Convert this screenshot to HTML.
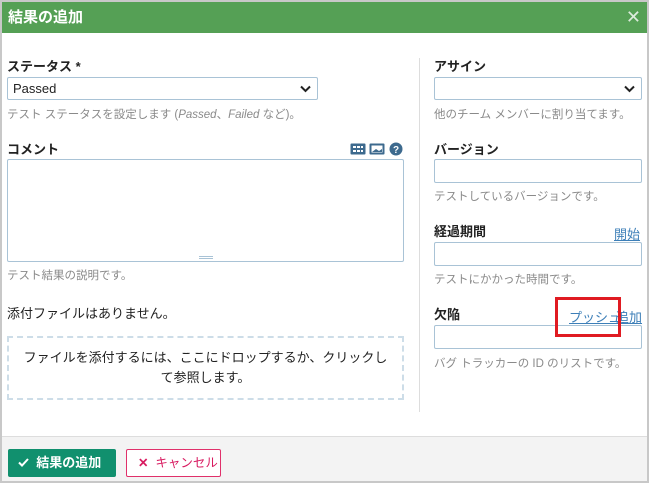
<!DOCTYPE html>
<html><head><meta charset="utf-8"><style>
*{box-sizing:border-box;margin:0;padding:0}
body{width:649px;height:483px;overflow:hidden;background:#fff;font-family:"Liberation Sans","Noto Sans CJK JP",sans-serif;font-size:13px;color:#222;position:relative}
.frame{position:absolute;left:0;top:0;width:649px;height:483px;border:2px solid #c8c8c8}
.hdr{position:absolute;left:2px;top:2px;width:645px;height:31px;background:#55a055;color:#fff;font-weight:bold;font-size:15px;line-height:31px;padding-left:6px}
.x{position:absolute;right:6px;top:0;font-size:18px;font-weight:normal;color:#dcebdc}
.a{position:absolute;white-space:nowrap}
.lbl{font-size:13px;font-weight:bold;color:#222}
.help{font-size:11.5px;color:#8a8a8a}
.box{position:absolute;border:1px solid #a9c3d6;background:#fff;border-radius:2px}
a.l{color:#3d7fb8;text-decoration:underline;font-size:13px}
.foot{position:absolute;left:2px;top:436px;width:645px;height:45px;background:#f3f3f3;border-top:1px solid #ddd}
</style></head><body>
<div class="hdr">結果の追加<span class="x">✕</span></div>
<div class="a lbl" style="left:7px;top:56px">ステータス *</div>
<div class="box" style="left:7px;top:77px;width:311px;height:23px"><span class="a" style="left:5px;top:3px;font-size:13px">Passed</span><svg class="a" style="right:6px;top:7px" width="11" height="8" viewBox="0 0 11 8"><path d="M1 1.5L5.5 6L10 1.5" stroke="#222" stroke-width="2" fill="none"/></svg></div>
<div class="a help" style="left:7px;top:106px">テスト ステータスを設定します (<i>Passed</i>、<i>Failed</i> など)。</div>
<div class="a lbl" style="left:7px;top:139px">コメント</div>
<svg class="a" style="left:350px;top:142px" width="54" height="14" viewBox="0 0 54 14"><rect x="0.5" y="1.5" width="15" height="11" fill="#3d6a8e" rx="1"/><g fill="#fff"><rect x="3" y="4" width="3" height="2"/><rect x="7" y="4" width="3" height="2"/><rect x="11" y="4" width="2" height="2"/><rect x="3" y="8" width="3" height="2"/><rect x="7" y="8" width="3" height="2"/><rect x="11" y="8" width="2" height="2"/></g><rect x="19.5" y="1.5" width="15" height="11" fill="#3d6a8e" rx="1"/><rect x="21.5" y="3.5" width="11" height="7" fill="#fff"/><path d="M22 10L26 7L29 9L32 7V10Z" fill="#3d6a8e"/><circle cx="46" cy="7" r="6.5" fill="#3d6a8e"/><text x="46" y="11" font-size="10" font-weight="bold" fill="#fff" text-anchor="middle" font-family="Liberation Sans">?</text></svg>
<div class="box" style="left:7px;top:159px;width:397px;height:103px"><div class="a" style="left:191px;top:96px;width:14px;border-top:1px solid #a9c3d6;height:3px;border-bottom:1px solid #a9c3d6"></div></div>
<div class="a help" style="left:7px;top:267px">テスト結果の説明です。</div>
<div class="a" style="left:7px;top:303px;font-size:13px">添付ファイルはありません。</div>
<div class="a" style="left:7px;top:336px;width:397px;height:64px;border:2px dashed #cddde8;text-align:center;font-size:13px;line-height:20px;padding:10px 10px 0;white-space:normal">ファイルを添付するには、ここにドロップするか、クリックして参照します。</div>
<div class="a" style="left:419px;top:58px;width:1px;height:354px;background:#ddd"></div>
<div class="a lbl" style="left:434px;top:56px">アサイン</div>
<div class="box" style="left:434px;top:77px;width:208px;height:23px"><svg class="a" style="right:6px;top:7px" width="11" height="8" viewBox="0 0 11 8"><path d="M1 1.5L5.5 6L10 1.5" stroke="#222" stroke-width="2" fill="none"/></svg></div>
<div class="a help" style="left:434px;top:106px">他のチーム メンバーに割り当てます。</div>
<div class="a lbl" style="left:434px;top:139px">バージョン</div>
<div class="box" style="left:434px;top:159px;width:208px;height:24px"></div>
<div class="a help" style="left:434px;top:188px">テストしているバージョンです。</div>
<div class="a lbl" style="left:434px;top:221px">経過期間</div>
<a class="a l" style="left:614px;top:224px">開始</a>
<div class="box" style="left:434px;top:242px;width:208px;height:24px"></div>
<div class="a help" style="left:434px;top:271px">テストにかかった時間です。</div>
<div class="a lbl" style="left:434px;top:304px">欠陥</div>
<a class="a l" style="left:569px;top:307px">プッシュ</a>
<a class="a l" style="left:616px;top:307px">追加</a>
<div class="box" style="left:434px;top:325px;width:208px;height:24px"></div>
<div class="a" style="left:555px;top:297px;width:66px;height:40px;border:3px solid #e01b22"></div>
<div class="a help" style="left:434px;top:355px">バグ トラッカーの ID のリストです。</div>
<div class="foot"></div>
<div class="a" style="left:8px;top:449px;width:108px;height:28px;background:#11906e;border-radius:2px;color:#fff;font-weight:bold;font-size:13px;line-height:28px;padding-left:10px"><svg width="11" height="9" viewBox="0 0 11 9" style="vertical-align:0"><path d="M1 4.5L4 7.5L10 1" stroke="#fff" stroke-width="2" fill="none"/></svg>&nbsp; 結果の追加</div>
<div class="a" style="left:126px;top:449px;width:95px;height:28px;background:#fff;border:1px solid #e0306a;border-radius:2px;color:#d81b60;font-size:12.5px;line-height:26px;padding-left:11px"><b>✕</b>&nbsp; キャンセル</div>
<div class="frame"></div>
</body></html>
